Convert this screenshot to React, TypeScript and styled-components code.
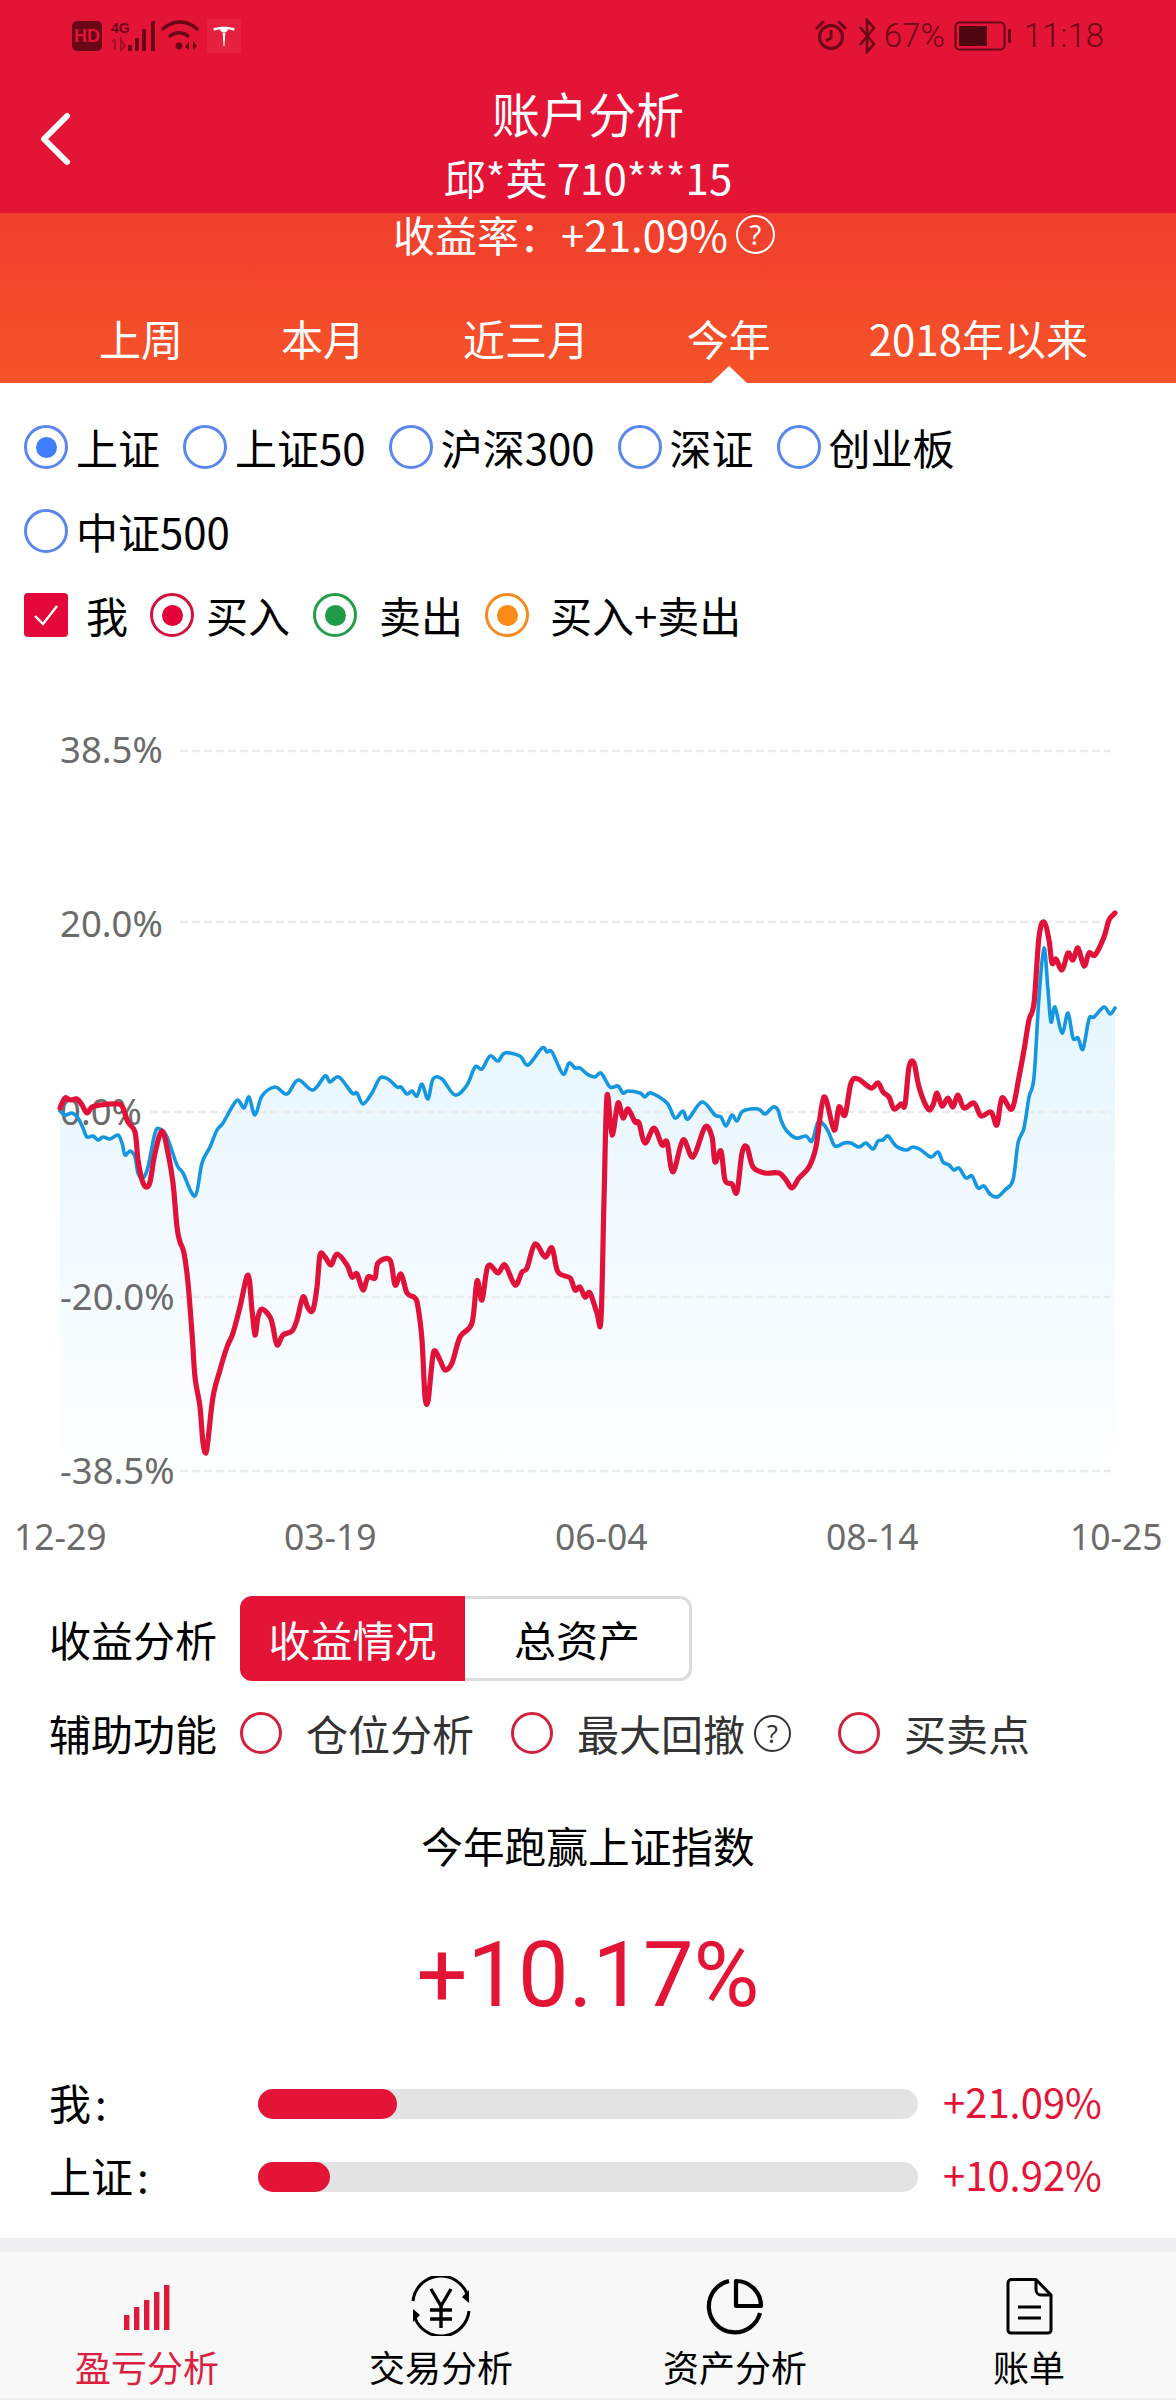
import React from "react";
import styled, { createGlobalStyle } from "styled-components";

const RED = "#e31436";
const CJK = `"Noto Sans CJK SC", "Noto Sans", sans-serif`;
const DARK = "#6b0618";

const Global = createGlobalStyle`
  html, body { margin: 0; padding: 0; background: #fff; }
  body { font-family: ${CJK}; color: #000; }
  * { box-sizing: border-box; }
`;

const Page = styled.div`
  width: 1176px;
  height: 2400px;
  overflow: hidden;
  display: flex;
  flex-direction: column;
  background: #fff;
  & > * {
    flex: none;
  }
`;

/* ---------- header ---------- */
const Header = styled.header`
  height: 213px;
  background: ${RED};
  color: #fff;
  display: flex;
  flex-direction: column;
`;
const StatusBar = styled.div`
  height: 72px;
  flex: none;
  padding: 0 72px 0 72px;
  display: flex;
  align-items: center;
  justify-content: space-between;
  color: ${DARK};
`;
const StatusGroup = styled.div`
  display: flex;
  align-items: center;
`;
const HdBadge = styled.span`
  width: 30px;
  height: 30px;
  border-radius: 5px;
  background: ${DARK};
  color: ${RED};
  font: 700 18px/30px "Liberation Sans", sans-serif;
  text-align: center;
`;
const TeslaTile = styled.span`
  width: 34px;
  height: 34px;
  margin-left: 8px;
  background: #e6203f;
  display: flex;
  align-items: center;
  justify-content: center;
`;
const StatusText = styled.span<{ $ml: number }>`
  margin-left: ${(p) => p.$ml}px;
  font: 300 33px/40px Roboto, sans-serif;
  color: ${DARK};
`;
const NavBar = styled.div`
  display: grid;
  grid-template-columns: 1fr auto 1fr;
  align-items: center;
`;
const BackButton = styled.div`
  padding-left: 38px;
  display: flex;
  align-items: center;
`;
const TitleBlock = styled.div`
  display: flex;
  flex-direction: column;
  align-items: center;
  margin-top: 8px;
`;
const Title = styled.div`
  font-size: 48px;
  line-height: 64px;
`;
const SubTitle = styled.div`
  font-size: 42px;
  line-height: 56px;
  margin-top: 5px;
`;
const Hero = styled.section`
  height: 170px;
  background: linear-gradient(#ef3e2d, #f65429);
  color: #fff;
  display: flex;
  flex-direction: column;
`;
const RateLine = styled.div`
  display: flex;
  align-items: center;
  justify-content: center;
  height: 42px;
  flex: none;
  padding-right: 8px;
  font-size: 42px;
  line-height: 42px;
`;
const Help = styled.span<{ $size: number; $color: string }>`
  width: ${(p) => p.$size}px;
  height: ${(p) => p.$size}px;
  border: 2px solid ${(p) => p.$color};
  border-radius: 50%;
  color: ${(p) => p.$color};
  display: inline-flex;
  align-items: center;
  justify-content: center;
  font: 400 ${(p) => Math.round(p.$size * 0.68)}px/1 "Noto Sans", sans-serif;
  margin-left: ${(p) => (p.$size > 37 ? 8 : 9)}px;
  flex: none;
`;
const Tabs = styled.nav`
  margin-top: 56px;
  padding: 0 88px 0 99px;
  display: flex;
  justify-content: space-between;
`;
const Tab = styled.span<{ $active?: boolean }>`
  position: relative;
  font-size: 42px;
  line-height: 54px;
  &::after {
    content: ${(p) => (p.$active ? '""' : "none")};
    position: absolute;
    left: 50%;
    bottom: -18px;
    margin-left: -18px;
    border-left: 18px solid transparent;
    border-right: 18px solid transparent;
    border-bottom: 17px solid #fff;
  }
`;

/* ---------- options ---------- */
const Options = styled.section`
  padding: 42px 0 0 24px;
  display: flex;
  flex-direction: column;
  gap: 40px;
`;
const IndexRow = styled.div`
  display: flex;
  flex-wrap: wrap;
  gap: 40px 23px;
`;
const LegendRow = styled.div`
  display: flex;
  align-items: center;
`;
const Choice = styled.label<{ $gap?: number; $mr?: number }>`
  display: inline-flex;
  align-items: center;
  gap: ${(p) => p.$gap ?? 8}px;
  margin-right: ${(p) => p.$mr ?? 0}px;
  font-size: 42px;
  line-height: 44px;
  height: 44px;
`;
const Radio = styled.span<{ $color: string; $dot?: string; $size?: number; $w?: number }>`
  width: ${(p) => p.$size ?? 44}px;
  height: ${(p) => p.$size ?? 44}px;
  border: ${(p) => p.$w ?? 3}px solid ${(p) => p.$color};
  border-radius: 50%;
  display: inline-flex;
  align-items: center;
  justify-content: center;
  flex: none;
  &::after {
    content: ${(p) => (p.$dot ? '""' : "none")};
    width: 21px;
    height: 21px;
    border-radius: 50%;
    background: ${(p) => p.$dot};
  }
`;
const CheckBox = styled.span`
  width: 44px;
  height: 44px;
  border-radius: 4px;
  background: #e4083a;
  display: inline-flex;
  align-items: center;
  justify-content: center;
  flex: none;
`;

/* ---------- chart ---------- */
const ChartSvg = styled.svg`
  display: block;
  width: 1176px;
  height: 933px;
`;
const AxisText = styled.text<{ $size: number }>`
  font-family: "Noto Sans", sans-serif;
  font-size: ${(p) => p.$size}px;
  fill: #6b6b6b;
`;

/* ---------- controls ---------- */
const Controls = styled.section`
  margin-top: 26px;
  padding-left: 49px;
  display: flex;
  flex-direction: column;
  gap: 24px;
`;
const ControlRow = styled.div`
  display: flex;
  align-items: center;
`;
const RowLabel = styled.span`
  width: 191px;
  font-size: 42px;
  line-height: 56px;
`;
const Segment = styled.div`
  display: flex;
  width: 452px;
  height: 85px;
`;
const SegmentItem = styled.span<{ $active?: boolean }>`
  flex: 0 0 ${(p) => (p.$active ? 225 : 227)}px;
  display: flex;
  align-items: center;
  justify-content: center;
  font-size: 42px;
  background: ${(p) => (p.$active ? RED : "#fff")};
  color: ${(p) => (p.$active ? "#fff" : "#000")};
  border: ${(p) => (p.$active ? "none" : "3px solid #dcdcdc")};
  border-left: none;
  border-radius: ${(p) => (p.$active ? "12px 0 0 12px" : "0 12px 12px 0")};
`;
const AuxItem = styled.span<{ $mr: number }>`
  display: inline-flex;
  align-items: center;
  gap: 24px;
  margin-right: ${(p) => p.$mr}px;
  color: #333;
  font-size: 42px;
  line-height: 42px;
`;
const AuxText = styled.span`
  display: inline-flex;
  align-items: center;
`;

/* ---------- summary ---------- */
const Headline = styled.div`
  margin-top: 54px;
  text-align: center;
  font-size: 41.7px;
  line-height: 60px;
`;
const BigNumber = styled.div`
  margin-top: 46px;
  text-align: center;
  color: ${RED};
  font: 400 90px/110px Roboto, sans-serif;
`;
const Compare = styled.div`
  margin-top: 58px;
  padding-left: 49px;
  display: flex;
  flex-direction: column;
  gap: 43px;
`;
const CompareRow = styled.div`
  display: flex;
  align-items: center;
  height: 30px;
`;
const CompareLabel = styled.span`
  width: 209px;
  margin-bottom: 4px;
  font-size: 42px;
  line-height: 30px;
`;
const Colon = styled.span`
  margin-left: 4px;
`;
const Track = styled.div`
  width: 660px;
  height: 30px;
  border-radius: 15px;
  background: #e3e3e3;
`;
const Fill = styled.div`
  height: 30px;
  border-radius: 15px;
  background: ${RED};
`;
const CompareValue = styled.span`
  margin-left: 25px;
  margin-bottom: 6px;
  color: ${RED};
  font: 400 40px/30px "Noto Sans CJK SC", sans-serif;
`;

/* ---------- footer ---------- */
const Footer = styled.footer`
  margin-top: 46px;
  padding: 14px 0 2px;
  background: #efeff1;
`;
const TabBar = styled.div`
  height: 146px;
  background: #f8f8f8;
  display: grid;
  grid-template-columns: repeat(4, 294px);
`;
const BarItem = styled.div<{ $active?: boolean }>`
  display: flex;
  flex-direction: column;
  align-items: center;
  padding-top: 24px;
  color: ${(p) => (p.$active ? "#dc1f41" : "#000")};
  font-size: 36px;
  line-height: 48px;
  gap: 6px;
`;

/* ---------- chart data ---------- */
type P = [number, number];
const RED_LINE: P[] = [
  [60,1108],[65,1098],[70,1100],[77,1099],[82,1105],[87,1113],[92,1107],[100,1105],[115,1104],[122,1106],[128,1122],[135,1132],[138,1160],[142,1180],[146,1187],[150,1182],[155,1153],[162,1131],[168,1153],[173,1183],[177,1227],[180,1242],[184,1253],[188,1283],[192,1333],[195,1377],[200,1407],[203,1443],[206,1453],[208,1440],[213,1397],[220,1370],[227,1347],[233,1333],[240,1307],[248,1275],[252,1310],[255,1335],[258,1317],[262,1309],[270,1317],[273,1327],[277,1345],[283,1335],[292,1331],[297,1320],[303,1297],[308,1308],[313,1310],[317,1287],[320,1255],[325,1257],[331,1265],[337,1254],[347,1265],[352,1277],[357,1274],[363,1290],[368,1277],[375,1278],[378,1263],[390,1260],[395,1285],[401,1274],[407,1293],[415,1298],[418,1307],[422,1340],[425,1397],[428,1401],[431,1373],[434,1351],[440,1360],[445,1370],[452,1363],[460,1337],[472,1323],[477,1281],[482,1300],[488,1266],[498,1273],[505,1265],[515,1285],[522,1272],[527,1268],[535,1244],[545,1257],[552,1248],[558,1272],[570,1278],[575,1290],[580,1287],[585,1297],[590,1293],[597,1313],[601,1319],[604,1200],[607,1096],[612,1135],[618,1103],[623,1118],[628,1109],[635,1122],[639,1123],[645,1143],[654,1128],[662,1145],[667,1142],[673,1172],[683,1140],[693,1157],[705,1127],[712,1137],[715,1162],[721,1151],[725,1180],[732,1184],[737,1192],[742,1153],[747,1147],[753,1167],[765,1173],[779,1173],[786,1180],[792,1188],[799,1178],[809,1167],[816,1147],[824,1097],[834,1130],[839,1107],[845,1115],[851,1083],[858,1079],[871,1088],[878,1083],[883,1092],[889,1097],[894,1109],[901,1104],[905,1105],[909,1067],[914,1063],[919,1087],[928,1109],[933,1105],[937,1093],[942,1106],[948,1098],[953,1107],[958,1095],[964,1108],[974,1103],[981,1116],[991,1112],[997,1125],[1002,1098],[1012,1109],[1019,1077],[1024,1050],[1029,1020],[1034,1003],[1039,937],[1044,922],[1049,940],[1052,963],[1056,959],[1062,970],[1068,953],[1073,960],[1078,948],[1084,966],[1089,953],[1095,955],[1104,937],[1109,920],[1115,913],
];
const BLUE_LINE: P[] = [
  [60,1111],[65,1115],[72,1113],[78,1118],[83,1128],[87,1137],[93,1136],[98,1140],[103,1137],[110,1139],[118,1135],[122,1143],[125,1155],[130,1151],[135,1157],[138,1173],[143,1178],[148,1167],[155,1133],[160,1129],[167,1137],[177,1165],[183,1173],[195,1196],[202,1163],[210,1147],[217,1130],[223,1123],[232,1107],[238,1100],[244,1108],[249,1097],[255,1115],[262,1096],[275,1087],[287,1094],[298,1080],[313,1090],[325,1076],[330,1082],[339,1077],[352,1093],[357,1093],[363,1104],[372,1093],[380,1078],[388,1079],[397,1087],[401,1087],[407,1094],[412,1091],[417,1096],[422,1084],[428,1099],[433,1079],[442,1079],[455,1095],[467,1085],[475,1067],[482,1069],[490,1056],[498,1061],[505,1053],[520,1056],[528,1065],[542,1048],[547,1052],[552,1052],[563,1074],[569,1063],[575,1068],[580,1068],[587,1074],[595,1077],[601,1073],[610,1087],[618,1086],[623,1093],[628,1091],[640,1093],[645,1097],[651,1093],[667,1103],[675,1118],[683,1111],[688,1119],[702,1102],[715,1115],[721,1117],[726,1126],[732,1115],[737,1121],[743,1111],[758,1109],[765,1114],[773,1107],[778,1110],[781,1120],[786,1130],[796,1138],[806,1136],[812,1141],[818,1122],[824,1125],[829,1133],[835,1146],[844,1143],[851,1143],[859,1147],[866,1143],[873,1149],[878,1141],[883,1140],[888,1136],[896,1146],[906,1150],[913,1147],[921,1150],[931,1157],[938,1152],[943,1162],[949,1165],[954,1170],[959,1168],[966,1178],[972,1176],[978,1188],[984,1186],[990,1194],[997,1197],[1005,1190],[1013,1180],[1018,1143],[1024,1128],[1029,1097],[1034,1077],[1039,997],[1044,948],[1048,990],[1051,1022],[1055,1007],[1062,1033],[1068,1013],[1073,1038],[1078,1038],[1083,1049],[1089,1019],[1094,1017],[1104,1007],[1110,1014],[1115,1008],
];

const smooth = (pts: P[]) => {
  let d = `M${pts[0][0]} ${pts[0][1]}`;
  for (let i = 0; i < pts.length - 1; i++) {
    const p0 = pts[Math.max(0, i - 1)];
    const p1 = pts[i];
    const p2 = pts[i + 1];
    const p3 = pts[Math.min(pts.length - 1, i + 2)];
    const c1x = p1[0] + (p2[0] - p0[0]) / 6;
    const c1y = p1[1] + (p2[1] - p0[1]) / 6;
    const c2x = p2[0] - (p3[0] - p1[0]) / 6;
    const c2y = p2[1] - (p3[1] - p1[1]) / 6;
    d += `C${c1x.toFixed(1)} ${c1y.toFixed(1)} ${c2x.toFixed(1)} ${c2y.toFixed(1)} ${p2[0]} ${p2[1]}`;
  }
  return d;
};

const GRID = [
  { y: 751, from: 180, to: 1111 },
  { y: 922, from: 180, to: 1111 },
  { y: 1112, from: 150, to: 1111 },
  { y: 1297, from: 180, to: 1111 },
  { y: 1471, from: 180, to: 1111 },
];
const Y_LABELS = [
  { y: 763, t: "38.5%", x: 60 },
  { y: 937, t: "20.0%", x: 60 },
  { y: 1125, t: "0.0%", x: 60 },
  { y: 1310, t: "-20.0%", x: 60 },
  { y: 1484, t: "-38.5%", x: 60 },
];
const X_LABELS = [
  { x: 14, t: "12-29" },
  { x: 284, t: "03-19" },
  { x: 555, t: "06-04" },
  { x: 826, t: "08-14" },
  { x: 1070, t: "10-25" },
];

const Chart = () => {
  const blue = smooth(BLUE_LINE);
  return (
    <ChartSvg viewBox="0 637 1176 933">
      <defs>
        <linearGradient id="area" gradientUnits="userSpaceOnUse" x1="0" y1="1000" x2="0" y2="1500">
          <stop offset="0" stopColor="#e6f5fe" />
          <stop offset="1" stopColor="#ffffff" />
        </linearGradient>
      </defs>
      <path d={`${blue}L1115 1500L60 1500Z`} fill="url(#area)" />
      {GRID.map((g) => (
        <line key={g.y} x1={g.from} x2={g.to} y1={g.y} y2={g.y} stroke="#e9ebec" strokeWidth="2.5" strokeDasharray="8 4" />
      ))}
      {Y_LABELS.map((l) => (
        <AxisText key={l.t} $size={36.5} x={l.x} y={l.y}>{l.t}</AxisText>
      ))}
      {X_LABELS.map((l) => (
        <AxisText key={l.t} $size={35.5} x={l.x} y={1550}>{l.t}</AxisText>
      ))}
      <path d={blue} fill="none" stroke="#1497e0" strokeWidth="3.6" strokeLinejoin="round" strokeLinecap="round" />
      <path d={smooth(RED_LINE)} fill="none" stroke="#e0123a" strokeWidth="5.2" strokeLinejoin="round" strokeLinecap="round" />
    </ChartSvg>
  );
};

/* ---------- icons ---------- */
const SignalIcon = () => (
  <svg width="50" height="32" viewBox="0 0 50 32" style={{ marginLeft: 9 }}>
    <text x="0" y="13" fontFamily="Liberation Sans, sans-serif" fontWeight="700" fontSize="14" fill={DARK}>4G</text>
    <path d="M4 19v11M1 22l3-3M10 19v11l4-4z" stroke="#a50f28" strokeWidth="2" fill="none" />
    <g fill={DARK}>
      <rect x="17" y="25" width="4" height="6" rx="1" />
      <rect x="24" y="18" width="4" height="13" rx="1" />
      <rect x="31" y="9" width="4" height="22" rx="1" />
      <rect x="40" y="1" width="4" height="30" rx="1" />
    </g>
  </svg>
);
const WifiIcon = () => (
  <svg width="38" height="32" viewBox="0 0 38 32">
    <g fill="none" stroke={DARK} strokeWidth="3.4" strokeLinecap="round">
      <path d="M2 9a24 24 0 0 1 34 0" />
      <path d="M9 16a14 14 0 0 1 18 0" />
    </g>
    <circle cx="18" cy="26" r="3.4" fill={DARK} />
    <path d="M28 21v9l-4-3zM32 21v9l4-4z" fill={DARK} />
  </svg>
);
const TeslaIcon = () => (
  <svg width="22" height="20" viewBox="0 0 22 20">
    <path d="M0 2.5C6 0 16 0 22 2.5l-1.5 2.2C18.5 3.6 16.5 3.4 15 3.4c-.6 1.6-2 3-4 3.2-2-.2-3.4-1.6-4-3.2-1.5 0-3.5.2-5.5 1.3z" fill="#fff" />
    <path d="M9.7 6.8h2.6L11.5 20h-1z" fill="#fff" />
  </svg>
);
const AlarmIcon = () => (
  <svg width="32" height="34" viewBox="0 0 32 34">
    <g fill="none" stroke={DARK} strokeWidth="3">
      <circle cx="16" cy="18" r="11.5" />
      <path d="M16 11v8l-5 3" />
      <path d="M2 9l6-6M30 9l-6-6" strokeLinecap="round" />
    </g>
  </svg>
);
const BluetoothIcon = () => (
  <svg width="20" height="36" viewBox="0 0 20 36" style={{ marginLeft: 10 }}>
    <path d="M3 9l14 17-7 8V2l7 8-14 17" fill="none" stroke={DARK} strokeWidth="2.6" />
  </svg>
);
const BatteryIcon = () => (
  <svg width="58" height="30" viewBox="0 0 58 30" style={{ marginLeft: 9 }}>
    <rect x="1.5" y="1.5" width="49" height="27" rx="4" fill="none" stroke={DARK} strokeWidth="2.2" />
    <rect x="5" y="5" width="28" height="20" rx="1" fill="#4f0612" />
    <rect x="54" y="8" width="3" height="14" rx="1.5" fill={DARK} />
  </svg>
);
const BackIcon = () => (
  <svg width="34" height="54" viewBox="0 0 34 54">
    <path d="M29 4L6 27l23 23" fill="none" stroke="#fff" strokeWidth="6" strokeLinecap="round" strokeLinejoin="round" />
  </svg>
);
const CheckIcon = () => (
  <svg width="28" height="24" viewBox="0 0 28 24">
    <path d="M3 13l8 8L25 3" fill="none" stroke="#fff" strokeWidth="2.4" />
  </svg>
);
const BarsIcon = () => (
  <svg width="60" height="60" viewBox="0 0 60 60">
    <g fill="#dc1a3a">
      <rect x="7" y="39" width="5.4" height="15" />
      <rect x="17" y="31" width="5.4" height="23" />
      <rect x="27" y="24" width="5.4" height="30" />
      <rect x="37" y="16" width="5.4" height="38" />
      <rect x="47" y="9" width="5.4" height="45" />
    </g>
  </svg>
);
const YenIcon = () => (
  <svg width="60" height="60" viewBox="0 0 60 60">
    <g fill="none" stroke="#000" strokeWidth="3">
      <path d="M2 25A28 28 0 0 1 56 18" />
      <path d="M58 35A28 28 0 0 1 4 42" />
      <path d="M20 13l10 17 10-17M30 30v22M19 34h22M19 43h22" strokeWidth="3.4" />
    </g>
    <path d="M58 14v13l-7-6zM2 46V33l7 6z" fill="#000" />
  </svg>
);
const PieIcon = () => (
  <svg width="60" height="60" viewBox="0 0 60 60">
    <g fill="none" stroke="#000" strokeWidth="4.2">
      <path d="M24 5A26 26 0 1 0 55 37" />
      <path d="M31 5a25 25 0 0 1 25 25H31z" strokeLinejoin="round" />
    </g>
  </svg>
);
const DocIcon = () => (
  <svg width="60" height="60" viewBox="0 0 60 60">
    <g fill="none" stroke="#000" strokeWidth="3" strokeLinejoin="round">
      <path d="M13 3.5h24L52 19v35a3 3 0 0 1-3 3H12a3 3 0 0 1-3-3V7a3.5 3.5 0 0 1 4-3.5z" />
      <path d="M37 3.5V14a5 5 0 0 0 5 5h10" />
      <path d="M19 31h23M19 42h23" />
    </g>
  </svg>
);

const INDEXES = ["上证", "上证50", "沪深300", "深证", "创业板", "中证500"];

export default function App() {
  return (
    <Page>
      <Global />
      <Header>
        <StatusBar>
          <StatusGroup>
            <HdBadge>HD</HdBadge>
            <SignalIcon />
            <WifiIcon />
            <TeslaTile><TeslaIcon /></TeslaTile>
          </StatusGroup>
          <StatusGroup>
            <AlarmIcon />
            <BluetoothIcon />
            <StatusText $ml={7}>67%</StatusText>
            <BatteryIcon />
            <StatusText $ml={12}>11:18</StatusText>
          </StatusGroup>
        </StatusBar>
        <NavBar>
          <BackButton><BackIcon /></BackButton>
          <TitleBlock>
            <Title>账户分析</Title>
            <SubTitle>邱*英 710***15</SubTitle>
          </TitleBlock>
          <span />
        </NavBar>
      </Header>
      <Hero>
        <RateLine>
          收益率：+21.09%
          <Help $size={39} $color="#fff">?</Help>
        </RateLine>
        <Tabs>
          <Tab>上周</Tab>
          <Tab>本月</Tab>
          <Tab>近三月</Tab>
          <Tab $active>今年</Tab>
          <Tab>2018年以来</Tab>
        </Tabs>
      </Hero>
      <Options>
        <IndexRow>
          {INDEXES.map((name, i) => (
            <Choice key={name}>
              <Radio $color="#5a86ee" $dot={i === 0 ? "#3f7fff" : undefined} />
              {name}
            </Choice>
          ))}
        </IndexRow>
        <LegendRow>
          <Choice $gap={18} $mr={22}><CheckBox><CheckIcon /></CheckBox>我</Choice>
          <Choice $gap={12} $mr={23}><Radio $color="#d4123f" $dot="#e4003a" />买入</Choice>
          <Choice $gap={22} $mr={22}><Radio $color="#269c4b" $dot="#209c48" />卖出</Choice>
          <Choice $gap={21}><Radio $color="#f28c1f" $dot="#fb8b17" />买入+卖出</Choice>
        </LegendRow>
      </Options>
      <Chart />
      <Controls>
        <ControlRow>
          <RowLabel>收益分析</RowLabel>
          <Segment>
            <SegmentItem $active>收益情况</SegmentItem>
            <SegmentItem>总资产</SegmentItem>
          </Segment>
        </ControlRow>
        <ControlRow>
          <RowLabel>辅助功能</RowLabel>
          <AuxItem $mr={37}><Radio $color="#d0213f" $size={42} />仓位分析</AuxItem>
          <AuxItem $mr={47}>
            <Radio $color="#d0213f" $size={42} />
            <AuxText>最大回撤<Help $size={37} $color="#333">?</Help></AuxText>
          </AuxItem>
          <AuxItem $mr={0}><Radio $color="#d0213f" $size={42} />买卖点</AuxItem>
        </ControlRow>
      </Controls>
      <Headline>今年跑赢上证指数</Headline>
      <BigNumber>+10.17%</BigNumber>
      <Compare>
        <CompareRow>
          <CompareLabel>我<Colon>:</Colon></CompareLabel>
          <Track><Fill style={{ width: 139 }} /></Track>
          <CompareValue>+21.09%</CompareValue>
        </CompareRow>
        <CompareRow>
          <CompareLabel>上证<Colon>:</Colon></CompareLabel>
          <Track><Fill style={{ width: 72 }} /></Track>
          <CompareValue>+10.92%</CompareValue>
        </CompareRow>
      </Compare>
      <Footer>
        <TabBar>
          <BarItem $active><BarsIcon />盈亏分析</BarItem>
          <BarItem><YenIcon />交易分析</BarItem>
          <BarItem><PieIcon />资产分析</BarItem>
          <BarItem><DocIcon />账单</BarItem>
        </TabBar>
      </Footer>
    </Page>
  );
}
